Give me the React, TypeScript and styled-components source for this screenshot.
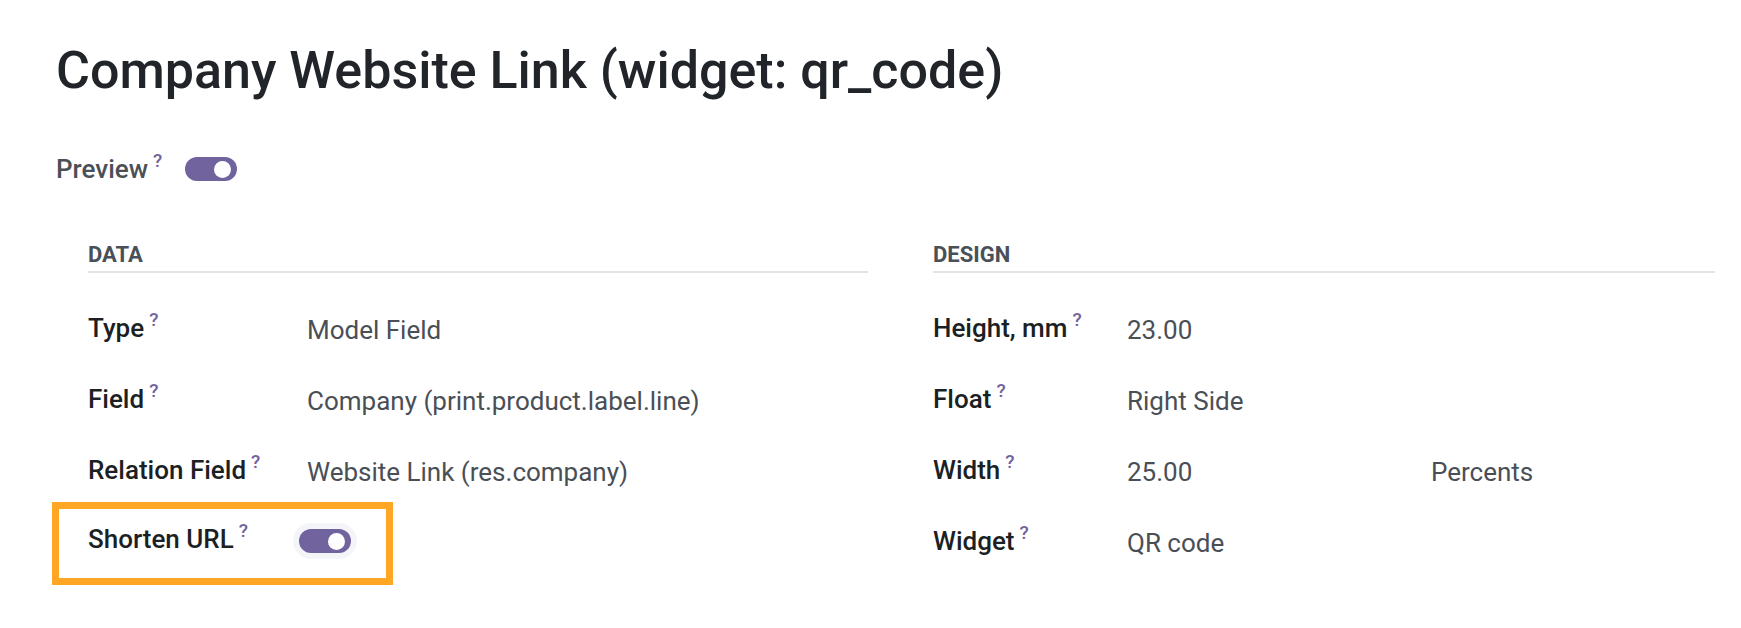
import styled, { createGlobalStyle } from 'styled-components';

const GlobalStyle = createGlobalStyle`
    body {
        margin: 0;
        background: #ffffff;
        font-family: Roboto, "Noto Sans", "Liberation Sans", sans-serif;
    }
`;

const Page = styled.div`
    min-height: 628px;
    box-sizing: border-box;
    padding: 40px 0 0 56px;
`;

const Title = styled.h1`
    margin: 0;
    font-size: 52px;
    font-weight: 500;
    line-height: 1.2;
    color: #212529;
`;

const PreviewRow = styled.div`
    display: flex;
    align-items: center;
    height: 38px;
    margin-top: 48px;
`;

const PreviewLabel = styled.span`
    font-size: 26px;
    font-weight: 500;
    color: #4b5057;
    line-height: 38px;
`;

const Help = styled.sup`
    font-size: 19px;
    font-weight: 500;
    color: #71639e;
    margin-left: 5px;
    vertical-align: 11px;
    line-height: 0;
`;

const Track = styled.span<{ $halo?: boolean; $offset?: number }>`
    position: relative;
    display: inline-block;
    width: 52px;
    height: 24px;
    border-radius: 12px;
    background: #71639e;
    margin-left: ${(p) => p.$offset ?? 0}px;
    box-shadow: ${(p) => (p.$halo ? '0 0 0 6px #f4f5f9' : 'none')};
    flex-shrink: 0;
`;

const Knob = styled.span`
    position: absolute;
    right: 6px;
    top: 3.5px;
    width: 17px;
    height: 17px;
    border-radius: 50%;
    background: #ffffff;
`;

const Groups = styled.div`
    display: grid;
    grid-template-columns: 780px 782px;
    column-gap: 65px;
    margin: 51px 0 0 32px;
`;

const Group = styled.section``;

const SectionTitle = styled.div`
    font-size: 22px;
    font-weight: 700;
    line-height: 31px;
    padding-bottom: 1px;
    text-transform: uppercase;
    color: #495057;
    border-bottom: 2px solid #e4e4e4;
`;

const Rows = styled.div`
    padding-top: 34px;
    display: flex;
    flex-direction: column;
    gap: 33px;
`;

const Row = styled.div<{ $labelWidth: number }>`
    position: relative;
    display: grid;
    grid-template-columns: ${(p) => p.$labelWidth}px 1fr;
    align-items: center;
    height: 38px;
`;

const Label = styled.div`
    font-size: 26px;
    font-weight: 500;
    color: #1c1f23;
    line-height: 38px;
    white-space: nowrap;
`;

const Value = styled.div`
    display: flex;
    align-items: center;
    font-size: 26px;
    font-weight: 400;
    color: #4a4f56;
    line-height: 38px;
    padding-top: 4px;
    white-space: nowrap;
`;

const ValuePart = styled.span<{ $width?: number }>`
    width: ${(p) => (p.$width ? `${p.$width}px` : 'auto')};
`;

const Highlight = styled.div`
    position: absolute;
    left: -36px;
    top: -18px;
    width: 341px;
    height: 83px;
    box-sizing: border-box;
    border: 7px solid #ffa724;
    pointer-events: none;
`;

function Switch({ halo, offset }: { halo?: boolean; offset?: number }) {
    return (
        <Track $halo={halo} $offset={offset}>
            <Knob />
        </Track>
    );
}

function FieldLabel({ children }: { children: string }) {
    return (
        <Label>
            {children}
            <Help>?</Help>
        </Label>
    );
}

export default function App() {
    return (
        <>
            <GlobalStyle />
            <Page>
                <Title>Company Website Link (widget: qr_code)</Title>
                <PreviewRow>
                    <PreviewLabel>
                        Preview<Help>?</Help>
                    </PreviewLabel>
                    <Switch offset={23} />
                </PreviewRow>
                <Groups>
                    <Group>
                        <SectionTitle>Data</SectionTitle>
                        <Rows>
                            <Row $labelWidth={219}>
                                <FieldLabel>Type</FieldLabel>
                                <Value>Model Field</Value>
                            </Row>
                            <Row $labelWidth={219}>
                                <FieldLabel>Field</FieldLabel>
                                <Value>Company (print.product.label.line)</Value>
                            </Row>
                            <Row $labelWidth={219}>
                                <FieldLabel>Relation Field</FieldLabel>
                                <Value>Website Link (res.company)</Value>
                            </Row>
                            <Row $labelWidth={219}>
                                <FieldLabel>Shorten URL</FieldLabel>
                                <Value>
                                    <Switch halo offset={-8} />
                                </Value>
                                <Highlight />
                            </Row>
                        </Rows>
                    </Group>
                    <Group>
                        <SectionTitle>Design</SectionTitle>
                        <Rows>
                            <Row $labelWidth={194}>
                                <FieldLabel>Height, mm</FieldLabel>
                                <Value>23.00</Value>
                            </Row>
                            <Row $labelWidth={194}>
                                <FieldLabel>Float</FieldLabel>
                                <Value>Right Side</Value>
                            </Row>
                            <Row $labelWidth={194}>
                                <FieldLabel>Width</FieldLabel>
                                <Value>
                                    <ValuePart $width={304}>25.00</ValuePart>
                                    <ValuePart>Percents</ValuePart>
                                </Value>
                            </Row>
                            <Row $labelWidth={194}>
                                <FieldLabel>Widget</FieldLabel>
                                <Value>QR code</Value>
                            </Row>
                        </Rows>
                    </Group>
                </Groups>
            </Page>
        </>
    );
}
